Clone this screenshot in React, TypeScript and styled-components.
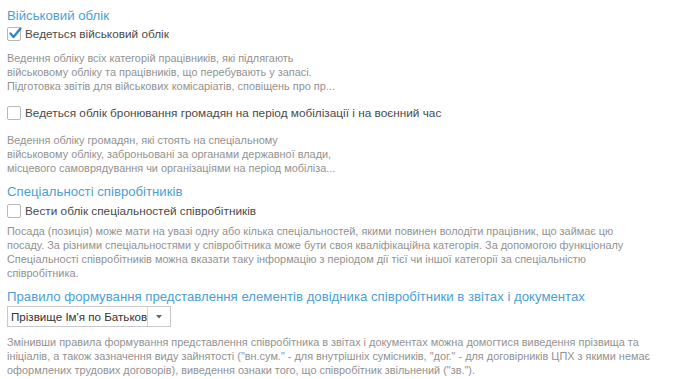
import styled, { createGlobalStyle } from "styled-components";

const Global = createGlobalStyle`
  html, body {
    margin: 0;
    padding: 0;
    background: #ffffff;
  }
  body {
    font-family: "Liberation Sans", Arial, sans-serif;
  }
`;

const Page = styled.div`
  padding: 7px 7px 0 7px;
  display: flex;
  flex-direction: column;
`;

const Heading = styled.div<{ $top?: number }>`
  color: #4b9fd6;
  font-size: 13.2px;
  line-height: 18px;
  margin-top: ${(p) => p.$top ?? 0}px;
`;

const CheckRow = styled.label<{ $top?: number }>`
  display: flex;
  align-items: center;
  gap: 4px;
  height: 16px;
  margin-top: ${(p) => p.$top ?? 1}px;
  font-size: 11.8px;
  color: #4a4a4a;
`;

const Box = styled.span`
  position: relative;
  width: 12px;
  height: 12px;
  border: 1px solid #b8b8b8;
  border-radius: 2px;
  background: #fff;
  flex: none;
`;

const Tick = styled.svg`
  position: absolute;
  left: 0px;
  top: -2px;
`;

const Desc = styled.div<{ $top?: number }>`
  margin-top: ${(p) => p.$top ?? 9}px;
  font-size: 10.9px;
  line-height: 14px;
  color: #929292;
  white-space: nowrap;
`;

const Line = styled.div``;

const Select = styled.div<{ $top?: number }>`
  margin-top: ${(p) => p.$top ?? 0}px;
  width: 162px;
  height: 19px;
  border: 1px solid #c9c9c9;
  display: flex;
  align-items: stretch;
  background: #fff;
`;

const SelectText = styled.div`
  flex: 1;
  overflow: hidden;
  white-space: nowrap;
  font-size: 11.6px;
  line-height: 19px;
  color: #333;
  padding-left: 3px;
  border-right: 1px solid #d4d4d4;
`;

const SelectArrow = styled.div`
  width: 22px;
  display: flex;
  align-items: center;
  justify-content: center;
`;

const Check = ({ checked, children, top }: { checked?: boolean; children: string; top?: number }) => (
  <CheckRow $top={top}>
    <Box>
      {checked && (
        <Tick width="15" height="14" viewBox="0 0 15 14">
          <path d="M2.5 7.5 L5.5 11 L12.5 2.5" fill="none" stroke="#2f86c9" strokeWidth="2.4" strokeLinecap="round" strokeLinejoin="round" />
        </Tick>
      )}
    </Box>
    {children}
  </CheckRow>
);

const Text = ({ lines, top }: { lines: string[]; top?: number }) => (
  <Desc $top={top}>
    {lines.map((l, i) => (
      <Line key={i}>{l}</Line>
    ))}
  </Desc>
);

export default function App() {
  return (
    <>
      <Global />
      <Page>
        <Heading>Військовий облік</Heading>
        <Check checked>Ведеться військовий облік</Check>
        <Text
          lines={[
            "Ведення обліку всіх категорій працівників, які підлягають",
            "військовому обліку та працівників, що перебувають у запасі.",
            "Підготовка звітів для військових комісаріатів, сповіщень про пр...",
          ]}
        />
        <Check top={12}>Ведеться облік бронювання громадян на період мобілізації і на воєнний час</Check>
        <Text
          top={12}
          lines={[
            "Ведення обліку громадян, які стоять на спеціальному",
            "військовому обліку, заброньовані за органами державної влади,",
            "місцевого самоврядування чи організаціями на період мобіліза...",
          ]}
        />
        <Heading $top={8}>Спеціальності співробітників</Heading>
        <Check top={2}>Вести облік спеціальностей співробітників</Check>
        <Text
          top={5}
          lines={[
            "Посада (позиція) може мати на увазі одну або кілька спеціальностей, якими повинен володіти працівник, що займає цю",
            "посаду. За різними спеціальностями у співробітника може бути своя кваліфікаційна категорія. За допомогою функціоналу",
            "Спеціальності співробітників можна вказати таку інформацію з періодом дії тієї чи іншої категорії за спеціальністю",
            "співробітника.",
          ]}
        />
        <Heading $top={8}>Правило формування представлення елементів довідника співробітники в звітах і документах</Heading>
        <Select>
          <SelectText>Прізвище Ім'я по Батькові</SelectText>
          <SelectArrow>
            <svg width="6" height="4" viewBox="0 0 6 4">
              <path d="M0 0 L6 0 L3 3.5 Z" fill="#666" />
            </svg>
          </SelectArrow>
        </Select>
        <Text
          top={8}
          lines={[
            "Змінивши правила формування представлення співробітника в звітах і документах можна домогтися виведення прізвища та",
            "ініціалів, а також зазначення виду зайнятості (\"вн.сум.\" - для внутрішніх сумісників, \"дог.\" - для договірників ЦПХ з якими немає",
            "оформлених трудових договорів), виведення ознаки того, що співробітник звільнений (\"зв.\").",
          ]}
        />
      </Page>
    </>
  );
}
